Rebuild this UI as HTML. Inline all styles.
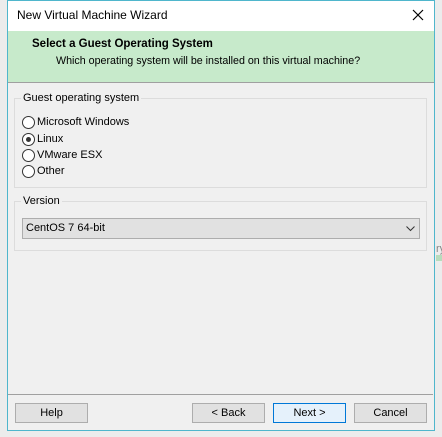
<!DOCTYPE html>
<html><head><style>
body{margin:0;width:442px;height:437px;background:#ececec;position:relative;overflow:hidden;font-family:"Liberation Sans",sans-serif;font-size:11px;color:#000}
.a{position:absolute}
.win{left:7px;top:0;width:426px;height:429px;border:1px solid #4fb6cc;background:#f0f0f0}
.btn{position:absolute;top:403px;height:18px;width:71px;border:1px solid #adadad;background:#e1e1e1;text-align:center;line-height:18px}
.rad{position:absolute;left:22px;width:11px;height:11px;border:1px solid #333;border-radius:50%;background:#fff}
.gb{position:absolute;border:1px solid #dcdcdc}
.lbl{position:absolute;background:#f0f0f0;padding:0 2px}
</style></head><body>
<div class="a win"></div>
<div class="a" style="left:8px;top:1px;width:426px;height:30px;background:#fff"></div>
<div class="a" style="left:17px;top:8px;font-size:12px">New Virtual Machine Wizard</div>
<svg class="a" style="left:412px;top:9px" width="12" height="12"><path d="M1 1L11 11M11 1L1 11" stroke="#000" stroke-width="1.2"/></svg>
<div class="a" style="left:8px;top:31px;width:426px;height:51px;background:#c7eacb;border-bottom:1px solid #a0a0a0"></div>
<div class="a" style="left:32px;top:38px;font-weight:bold;font-size:11.5px">Select a Guest Operating System</div>
<div class="a" style="left:56px;top:55px;font-size:10.7px">Which operating system will be installed on this virtual machine?</div>
<div class="gb" style="left:14px;top:98px;width:411px;height:88px"></div>
<div class="lbl" style="left:21px;top:92px">Guest operating system</div>
<div class="rad" style="top:116px"></div><div class="a" style="left:37px;top:116px">Microsoft Windows</div>
<div class="rad" style="top:133px"></div><div class="a" style="left:26px;top:137px;width:5px;height:5px;border-radius:50%;background:#333"></div><div class="a" style="left:37px;top:133px">Linux</div>
<div class="rad" style="top:149px"></div><div class="a" style="left:37px;top:149px">VMware ESX</div>
<div class="rad" style="top:165px"></div><div class="a" style="left:37px;top:165px">Other</div>
<div class="gb" style="left:14px;top:201px;width:411px;height:48px"></div>
<div class="lbl" style="left:21px;top:195px">Version</div>
<div class="a" style="left:22px;top:218px;width:396px;height:19px;border:1px solid #adadad;background:#e1e1e1"></div>
<div class="a" style="left:26px;top:222px">CentOS 7 64-bit</div>
<svg class="a" style="left:406px;top:226px" width="9" height="6"><path d="M0.5 0.5L4.5 4.5L8.5 0.5" fill="none" stroke="#333"/></svg>
<div class="a" style="left:8px;top:394px;width:425px;height:1px;background:#a0a0a0"></div>
<div class="btn" style="left:15px">Help</div>
<div class="btn" style="left:192px">&lt; Back</div>
<div class="btn" style="left:273px;border-color:#0078d7;background:#e5f1fb">Next &gt;</div>
<div class="btn" style="left:354px">Cancel</div>
<div class="a" style="left:436px;top:243px;color:#888;font-size:11px">ry</div>
<div class="a" style="left:436px;top:255px;width:6px;height:6px;background:#b7dcbc"></div>
</body></html>
